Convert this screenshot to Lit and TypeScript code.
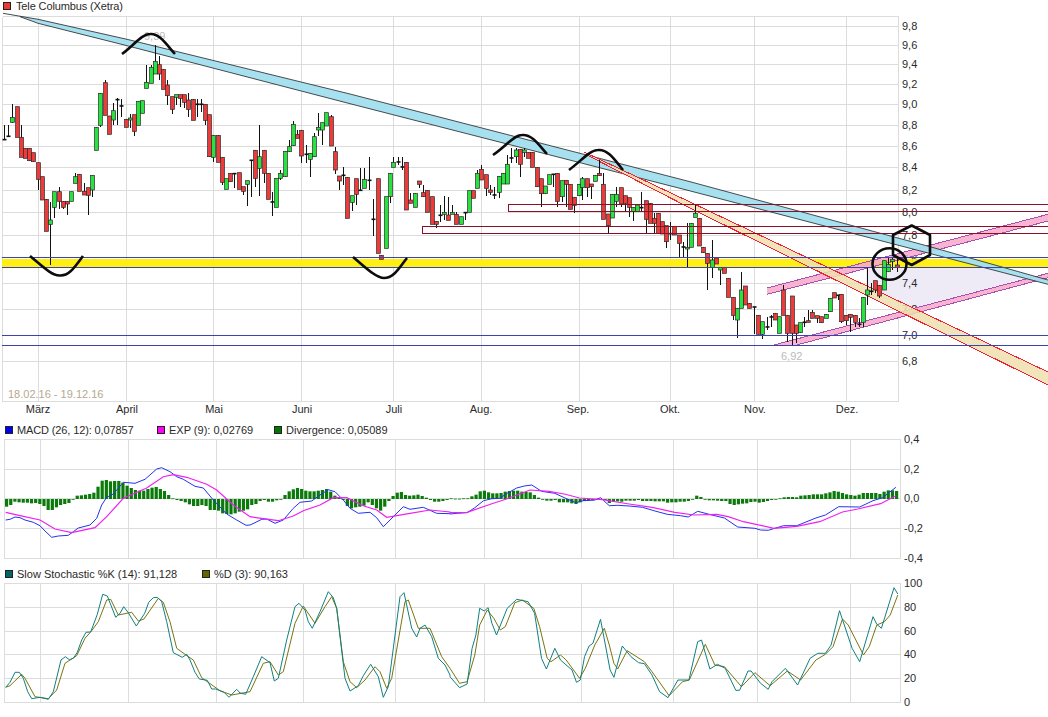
import { LitElement, html, svg, css } from "lit";
import { customElement } from "lit/decorators.js";

type C = [number, number, number, number, number, string];

// [zoomX, bodyTop, bodyBottom, wickTop, wickBottom, colour] in crop coordinates
const A: C[] = [
[12,418,418,375,418,"d"],[25,408,408,375,408,"d"],[37,352,367,312,370,"g"],[52,320,412,320,412,"r"],[64,412,472,375,472,"r"],
[76,445,475,445,475,"r"],[88,445,482,445,482,"r"],[100,458,485,458,485,"r"],[115,488,538,488,570,"r"],[127,530,600,530,600,"r"],
[139,598,694,598,694,"r"],[151,660,673,606,795,"g"],[163,575,622,575,655,"g"],[178,575,604,560,628,"r"],[190,604,622,604,628,"r"],
[202,604,612,604,645,"r"],[214,575,604,575,604,"g"],[226,530,550,520,550,"g"],[238,523,574,523,574,"r"],[253,574,585,550,585,"r"],
[265,563,586,563,645,"r"],[277,526,570,526,592,"g"],[289,382,451,382,451,"g"],[301,280,376,280,380,"g"],[316,248,346,240,346,"r"],
[328,348,403,348,403,"r"],[340,332,360,310,375,"g"],[352,298,298,293,375,"d"],[364,317,317,298,350,"d"],[379,358,382,358,382,"r"],
[391,354,360,342,385,"g"],[403,344,394,344,408,"r"],[415,304,376,304,376,"g"],[427,302,340,302,340,"g"],[439,247,265,195,265,"g"],
[454,202,250,195,250,"g"],[466,184,222,135,222,"g"],[478,194,222,168,240,"r"],[490,208,268,208,268,"r"],[502,255,287,240,315,"r"],
[517,290,328,290,342,"r"],[529,284,292,284,315,"g"],[541,284,295,284,322,"r"],[553,284,307,284,325,"r"],[565,300,328,278,350,"r"],
[580,298,361,298,361,"r"],[592,312,312,298,350,"d"],[604,312,312,298,335,"d"],[616,313,361,313,375,"r"],[628,344,470,344,470,"r"],
[640,406,472,406,485,"g"],[655,406,487,406,487,"r"],[667,472,547,472,555,"r"],[679,536,568,536,568,"g"],[691,520,545,520,545,"r"],
[703,520,520,520,565,"d"],[718,518,568,518,568,"r"],[730,560,574,560,586,"r"],[742,542,553,542,617,"g"],[754,480,480,480,590,"d"],
[766,451,535,451,560,"r"],[778,470,505,375,587,"g"],[793,451,520,451,550,"r"],[805,520,598,520,598,"r"],[817,605,605,575,648,"d"],
[829,535,622,535,622,"g"],[841,520,535,510,540,"g"],[856,454,530,454,530,"g"],[868,440,455,420,455,"g"],[880,373,437,362,437,"g"],
[892,403,415,390,415,"r"],[904,391,468,391,490,"r"],[919,462,462,435,490,"d"],[931,460,478,460,530,"g"],[943,410,470,400,470,"g"],
[955,382,390,340,408,"g"],[967,368,390,368,436,"g"],[979,338,378,338,378,"g"],[994,350,438,345,438,"r"],[1006,455,510,440,522,"r"],
[1018,528,543,528,570,"r"],[1030,525,525,500,556,"d"],[1042,532,655,532,655,"r"],
];
const B: C[] = [
[36,287,307,287,332,"g"],[49,236,283,236,315,"r"],[60,270,270,205,270,"d"],[73,238,265,205,265,"g"],[86,240,240,170,270,"d"],
[100,357,357,298,407,"d"],[113,236,460,236,460,"r"],[124,466,478,466,478,"r"],[137,290,445,290,445,"g"],[149,220,290,220,310,"g"],
[160,187,202,170,202,"g"],[175,185,185,170,195,"d"],[187,200,200,170,210,"d"],[199,187,330,187,330,"r"],[211,300,310,280,310,"r"],
[224,280,322,280,322,"g"],[238,243,253,243,265,"r"],[250,278,290,255,290,"r"],[262,271,337,271,337,"r"],[275,290,373,290,373,"r"],
[287,364,373,364,385,"r"],[300,345,345,315,365,"d"],[312,337,343,287,360,"g"],[325,345,361,290,361,"r"],[337,337,343,315,343,"g"],
[349,343,373,335,373,"r"],[362,350,373,350,373,"g"],[375,337,337,337,360,"d"],[388,272,337,272,337,"g"],[400,272,295,272,295,"r"],
[412,220,265,210,265,"g"],[424,208,240,195,240,"r"],[439,224,265,224,288,"r"],[451,270,277,255,285,"r"],[463,284,284,262,297,"d"],
[476,229,277,229,295,"g"],[488,220,252,220,252,"g"],[501,193,252,165,252,"g"],[514,173,173,143,190,"d"],[527,150,170,143,190,"g"],
[539,148,193,148,230,"r"],[551,150,158,143,170,"g"],[563,157,175,157,175,"r"],[577,157,202,157,202,"r"],[590,202,260,202,260,"r"],
[602,236,281,236,322,"r"],[614,258,281,258,281,"g"],[626,224,253,224,253,"g"],[640,222,222,222,260,"d"],[652,220,304,220,320,"r"],
[665,242,290,242,305,"g"],[677,241,253,241,320,"r"],[689,253,328,253,328,"r"],[703,292,316,292,340,"r"],[716,253,287,253,287,"g"],
[727,236,263,230,300,"g"],[740,236,263,236,290,"r"],[752,252,260,252,298,"r"],[765,226,244,226,244,"g"],[778,220,227,180,227,"r"],
[790,253,358,220,358,"r"],[803,342,377,342,400,"r"],[815,283,354,283,354,"g"],[828,283,304,262,320,"g"],[842,263,312,263,320,"r"],
[854,287,310,287,335,"r"],[866,293,322,293,350,"r"],[878,322,335,322,362,"g"],[890,315,335,315,335,"g"],[903,322,322,275,335,"d"],
[917,302,358,302,400,"r"],[929,310,370,310,370,"r"],[941,355,370,340,400,"r"],[953,340,400,340,400,"r"],[965,365,402,365,402,"r"],
[978,377,425,377,445,"r"],[990,400,400,365,420,"d"],[1003,380,405,380,405,"r"],[1016,405,430,405,470,"r"],[1029,440,440,425,475,"d"],
[1042,442,447,370,500,"g"],
];
const D: C[] = [
[34,100,172,100,172,"g"],[46,70,82,45,82,"g"],[58,85,168,85,168,"r"],[70,172,188,172,188,"r"],[82,190,220,190,300,"r"],
[95,210,232,150,265,"g"],[108,204,222,204,222,"r"],[121,232,240,232,285,"g"],[133,232,250,232,250,"r"],[145,265,322,265,322,"r"],
[160,322,376,322,390,"r"],[172,355,390,355,443,"g"],[184,300,355,245,355,"g"],[196,288,345,288,345,"r"],[208,340,355,340,355,"r"],
[222,350,350,350,432,"d"],[235,376,433,376,433,"r"],[247,395,433,395,448,"g"],[260,410,410,380,420,"d"],[272,380,380,375,410,"d"],
[284,370,390,370,390,"r"],[298,380,430,380,430,"g"],[310,300,376,285,376,"r"],[322,376,430,376,455,"r"],[335,318,430,318,465,"r"],
[347,405,430,405,460,"r"],[360,398,428,398,428,"g"],[372,396,396,380,410,"d"],[385,392,397,360,397,"r"],[397,367,385,360,385,"r"],
[410,377,385,377,400,"r"],[424,380,398,380,398,"r"],[437,373,385,373,385,"g"],[449,325,365,325,365,"g"],[461,308,324,308,324,"r"],
[473,315,315,315,330,"d"],[484,313,395,313,400,"r"],[498,376,392,376,405,"r"],[511,373,382,373,425,"r"],[524,376,397,376,410,"r"],
[536,402,402,385,410,"d"],[548,322,397,322,412,"g"],[562,300,315,235,345,"g"],[574,303,303,280,315,"d"],[586,272,300,272,310,"r"],
[598,286,318,286,325,"r"],[611,212,300,212,300,"g"],[624,223,245,205,245,"g"],[637,208,215,200,240,"g"],[650,225,232,205,245,"r"],
];

const candle = (rows: C[], ox: number, oy: number) =>
  rows.map(([zx, t, b, wt, wb, c]) => {
    const x = Math.round(ox + zx / 3) + 0.5;
    const y = (v: number) => oy + v / 3;
    const wick = svg`<line class="wick" x1=${x} x2=${x} y1=${y(wt)} y2=${y(wb)}></line>`;
    if (c === "d") {
      return svg`${wick}<rect class="doji" x=${x - 2} y=${y(t) - 0.5} width="4" height="1.6"></rect>`;
    }
    return svg`${wick}<rect class=${c === "r" ? "red" : "green"} x=${x - 1.9} y=${y(t)} width="3.8" height=${Math.max(y(b) - y(t), 1.5)}></rect>`;
  });

const pts = (p: number[][], sx: number, ox: number, oy: number) =>
  p.map(([x, y]) => `${(ox + x / sx).toFixed(1)},${(oy + y / 3).toFixed(1)}`).join(" ");

const S2 = 2.624;
const macdA = [[17,300],[30,298],[45,291],[60,293],[75,300],[100,307],[120,317],[135,333],[155,352],[175,348],[205,346],[220,335],[235,324],[270,315],[290,295],[305,255],[320,232],[340,222],[370,187],[405,190],[435,178],[470,147],[485,143],[510,155],[530,170],[550,178],[585,199],[610,204],[640,240],[680,282],[710,300],[738,316],[750,315],[765,308],[785,298],[800,297],[825,310],[850,300],[880,265],[900,247],[935,243],[960,225],[985,209],[1005,215],[1030,240],[1050,265],[1075,280],[1110,277],[1130,293],[1150,320],[1170,300],[1210,260],[1230,268],[1270,262],[1310,280],[1350,281]];
const macdB = [[0,252],[20,250],[45,248],[65,233],[88,212],[110,206],[130,205],[150,190],[175,174],[195,168],[215,165],[240,184],[275,190],[300,203],[330,218],[350,212],[380,210],[395,203],[418,227],[440,226],[470,228],[505,232],[535,242],[570,253],[605,257],[625,261],[650,244],[680,253],[720,264],[755,291],[800,295],[815,300],[835,301],[875,287],[910,287],[960,264],[985,255],[1020,230],[1075,231],[1110,212],[1135,203],[1170,172]];
const expA = [[17,277],[60,287],[120,300],[165,327],[215,338],[285,323],[320,290],[370,235],[440,204],[490,170],[520,164],[560,172],[620,193],[650,210],[700,255],[750,290],[790,296],[835,302],[880,288],[910,272],[960,255],[1000,233],[1040,233],[1090,257],[1130,270],[1160,292],[1230,280],[1290,270],[1350,276]];
const expB = [[0,248],[45,247],[110,221],[150,206],[210,180],[260,184],[300,192],[340,204],[400,209],[470,222],[530,232],[590,247],[640,255],[700,253],[730,260],[770,275],[850,295],[910,289],[970,275],[1030,246],[1070,237],[1130,221],[1170,197]];
const kA = [[17,367],[30,352],[45,322],[58,322],[70,340],[83,380],[95,401],[120,397],[145,403],[160,380],[183,285],[196,275],[208,284],[220,280],[232,262],[245,225],[258,202],[272,201],[292,148],[308,88],[322,93],[347,157],[360,145],[371,125],[385,143],[409,183],[434,145],[446,112],[460,98],[472,97],[485,110],[500,170],[520,263],[547,277],[560,268],[570,285],[585,322],[598,342],[622,346],[635,372],[647,372],[672,382],[687,397],[710,373],[720,384],[737,388],[760,335],[785,275],[810,293],[823,348],[835,340],[860,225],[885,125],[897,115],[915,135],[925,170],[937,190],[960,140],[985,80],[1000,98],[1010,130],[1035,340],[1050,378],[1075,362],[1090,332],[1112,298],[1135,335],[1150,397],[1165,365],[1200,95],[1212,83],[1235,190],[1250,216],[1260,190],[1275,180],[1295,215],[1315,280],[1335,300],[1350,330]];
const kB = [[0,335],[25,368],[45,357],[58,250],[68,210],[78,130],[90,138],[100,128],[110,175],[122,210],[150,130],[175,103],[205,110],[222,145],[240,280],[253,312],[275,250],[290,285],[320,315],[332,352],[342,345],[353,275],[365,243],[375,235],[395,163],[420,315],[430,337],[452,243],[475,275],[495,293],[510,296],[530,330],[550,380],[572,398],[598,345],[627,345],[650,230],[660,225],[682,312],[702,298],[722,310],[750,376],[760,376],[782,318],[790,318],[815,355],[835,373],[845,350],[880,310],[912,360],[945,280],[965,265],[985,265],[1000,240],[1022,137],[1055,250],[1075,290],[1110,155],[1120,178],[1132,190],[1165,68],[1175,87]];
const dA = [[17,367],[30,362],[65,328],[75,340],[105,395],[145,401],[170,375],[195,295],[230,272],[255,220],[275,197],[295,170],[320,105],[332,103],[355,150],[395,142],[415,168],[432,162],[475,100],[490,112],[510,170],[530,250],[555,268],[580,285],[605,338],[660,377],[695,390],[750,380],[790,295],[810,290],[835,330],[850,320],[885,175],[910,123],[945,175],[975,125],[995,95],[1010,130],[1030,290],[1050,350],[1070,368],[1095,345],[1125,305],[1140,320],[1160,370],[1175,340],[1215,110],[1225,105],[1255,190],[1290,190],[1325,275],[1350,310]];
const dB = [[0,310],[25,355],[45,350],[65,270],[78,180],[98,135],[115,160],[132,195],[145,185],[170,113],[190,105],[220,130],[235,185],[255,280],[265,290],[290,270],[305,285],[340,340],[355,310],[380,240],[405,190],[418,240],[430,295],[440,312],[465,257],[510,290],[530,320],[575,392],[610,350],[628,345],[670,238],[695,300],[720,305],[765,365],[800,323],[840,362],[885,318],[920,345],[960,285],[985,268],[1005,245],[1030,162],[1045,180],[1085,270],[1100,245],[1120,180],[1140,170],[1155,150],[1175,90]];

// histogram: height in 3x crop units, positive up, one bar per trading day
const hist1 = [-23,-18,-8,-10,-11,-11,-13,-12,-15,-21,-33,-33,-25,-18,-15,-12,0,10,11,13,15,19,37,55,57,53,54,54,49,40,33,27,25,25,30,34,36,30,24,12,2,-3,-6,-10,-16,-21,-21,-18,-21,-33,-33,-35,-43,-45,-46,-43,-38,-35,-31,-18,-15,-6,-3,-8,-8,-4,0,12,23,29,33,30,25,23,23,25,27,30,22,10,4,-3,-21,-28,-25,-23,-20,-10,-18,-28,-35,-23,-6,9,19,21,12,10,11,13,9,4,-3,-8,-8,-6,-3];
const hist2 = [2,1,1,2,2,8,13,23,25,20,17,17,18,22,24,25,25,22,21,20,12,4,-2,-5,-5,-3,-10,-10,-10,-13,-15,-10,-6,-5,-4,-2,0,-3,-12,-9,-7,-8,-5,-5,-5,-3,-6,-6,-6,-7,-7,-7,-11,-10,-10,-8,-8,-6,-2,10,6,-2,-4,-4,-5,-6,-6,-15,-18,-16,-14,-13,-9,-8,-11,-9,-6,-3,-1,2,5,6,6,5,10,11,12,14,14,14,17,20,24,22,18,14,12,10,13,18,18,18,18,15,22,26,26,24];

const mainY: [string, number][] = [["9,8",26],["9,6",45],["9,4",64],["9,2",84],["9,0",104],["8,8",125],["8,6",146],["8,4",167],["8,2",190],["8,0",212],["7,8",235],["7,6",259],["7,4",283],["7,2",309],["7,0",335],["6,8",361]];
const mainX = [38,126,213,301,393,481,579,670,754,846];
const months: [string, number][] = [["März",38],["April",127],["Mai",214],["Juni",302],["Juli",394],["Aug.",481],["Sep.",578],["Okt.",670],["Nov.",755],["Dez.",847]];
const lowerX = [40,128,216,303,395,484,581,673,757,850];

const arc = (d: string) => svg`<path class="ink" d=${d}></path>`;

const bars = (list: number[], from: number, to: number) => {
  const step = (to - from) / (list.length - 1);
  return list.map((v, i) => {
    const h = Math.abs(v) / 3;
    return svg`<rect class="bar" x=${from + i * step} y=${v > 0 ? 499 - h : 499} width="3.2" height=${Math.max(h, 0.8)}></rect>`;
  });
};

@customElement("app-root")
export class AppRoot extends LitElement {
  static styles = css`
    :host { display: block; width: 1048px; height: 717px; background: #fff; overflow: hidden; font-family: "Liberation Sans", Arial, sans-serif; font-size: 11px; color: #2a2a2a; }
    .legend { display: flex; align-items: center; }
    .l1 { height: 12px; padding-left: 3px; letter-spacing: -0.13px; }
    .l2 { height: 20px; padding-top: 4px; box-sizing: border-box; padding-left: 5px; }
    .l3 { height: 16px; padding-left: 5px; }
    .item { display: flex; align-items: center; gap: 4px; white-space: nowrap; }
    .l1 .item { gap: 5px; }
    .m1 { width: 152px; letter-spacing: -0.13px; }
    .m2 { width: 117px; }
    .s1 { width: 197px; }
    .sq { width: 6px; height: 6px; border: 1px solid #222; flex: none; }
    svg { display: block; overflow: visible; }
    text { font-family: "Liberation Sans", Arial, sans-serif; font-size: 11px; fill: #2a2a2a; }
    .grid { stroke: #dcdcdc; stroke-width: 1; shape-rendering: crispEdges; }
    .wick { stroke: #111; stroke-width: 1; shape-rendering: crispEdges; }
    .doji { fill: #111; }
    .red { fill: #f03a3a; stroke: #2a2a2a; stroke-width: 0.7; }
    .green { fill: #26e33e; stroke: #2a2a2a; stroke-width: 0.7; }
    .faint { fill: #bbb; }
    .range { fill: #b5a98e; }
    .ink { fill: none; stroke: #0c0c0c; stroke-width: 2.6; stroke-linejoin: round; }
    .yellow { fill: #ffee00; opacity: 0.92; }
    .hline { stroke: #3a44b0; stroke-width: 1; shape-rendering: crispEdges; }
    .box { stroke: #8a1028; stroke-width: 1; shape-rendering: crispEdges; fill: none; }
    .lav { fill: #eeebf7; }
    .bluefill { fill: #a2deee; opacity: 0.95; }
    .blueline { stroke: #222; stroke-width: 0.8; fill: none; }
    .orfill { fill: #eedfae; opacity: 0.85; }
    .orline { stroke: #f02030; stroke-width: 1; fill: none; shape-rendering: crispEdges; }
    .pkfill { fill: #f8aacb; opacity: 0.88; }
    .pkline { stroke: #a850b0; stroke-width: 1; fill: none; shape-rendering: crispEdges; }
    .macd { stroke: #2233ee; stroke-width: 1; fill: none; }
    .exp { stroke: #f020f0; stroke-width: 1.2; fill: none; }
    .bar { fill: #0a7a0a; }
    .k { stroke: #117f80; stroke-width: 1; fill: none; }
    .d { stroke: #7a7410; stroke-width: 1; fill: none; }
  `;

  private mainChart() {
    const hs = mainY.map(([, y]) => svg`<line class="grid" x1="2.5" x2="898.5" y1=${y + 0.5} y2=${y + 0.5}></line>`);
    const vs = mainX.map((x) => svg`<line class="grid" x1=${x + 0.5} x2=${x + 0.5} y1="16.5" y2="401.5"></line>`);
    return svg`
      <svg width="1048" height="406" viewBox="0 12 1048 406">
        <line class="grid" x1="2.5" x2="898.5" y1="16.5" y2="16.5"></line>
        <line class="grid" x1="2.5" x2="898.5" y1="401.5" y2="401.5"></line>
        <line class="grid" x1="2.5" x2="2.5" y1="16.5" y2="401.5"></line>
        <line class="grid" x1="898.5" x2="898.5" y1="16.5" y2="401.5"></line>
        ${hs}${vs}
        <polygon class="lav" points="866,268 1000,267 1027,281 915,309 866,286"></polygon>
        ${mainY.map(([t, y]) => svg`<text x="902" y=${y + 4}>${t}</text>`)}
        ${months.map(([t, x]) => svg`<text x=${x} y="413" text-anchor="middle">${t}</text>`)}
        <text class="range" x="8" y="398">18.02.16 - 19.12.16</text>
        <text class="faint" x="144" y="40">9,39</text>
        <text class="faint" x="781" y="360">6,92</text>

        <rect class="yellow" x="2" y="259" width="1046" height="8"></rect>

        <polygon class="pkfill" points="767,288 1048,214.3 1048,221 767,294.3"></polygon>
        <polyline class="pkline" points="767,288 1048,214.3"></polyline>
        <polyline class="pkline" points="767,294.3 1048,221"></polyline>
        <polygon class="pkfill" points="770,346 1048,273.3 1048,277.7 793,346"></polygon>
        <polyline class="pkline" points="770,346 1048,273.3"></polyline>
        <polyline class="pkline" points="793,346 1048,277.7"></polyline>

        <polygon class="bluefill" points="3,13.3 38,19.3 127,39.3 350,94 690,181.7 930,246.7 1048,280 1048,284.3 930,253.5 690,190.9 350,103.7 127,45.7 38,23.3 20,16.7"></polygon>
        <polyline class="blueline" points="3,13.3 38,19.3 127,39.3 350,94 690,181.7 930,246.7 1048,280"></polyline>
        <polyline class="blueline" points="20,16.7 38,23.3 127,45.7 350,103.7 690,190.9 930,253.5 1048,284.3"></polyline>

        <polygon class="orfill" points="584,152 690,202 1048,372 1048,385 690,208 587,155"></polygon>
        <polyline class="orline" points="584,152 690,202 1048,372"></polyline>
        <polyline class="orline" points="587,155 690,208 1048,385"></polyline>

        ${candle(A, 0, 0)}
        ${candle(B, 340, 100)}
        ${candle(D, 680, 190)}

        <line class="hline" x1="2" x2="1048" y1="257.5" y2="257.5"></line>
        <line class="hline" x1="2" x2="1048" y1="267.5" y2="267.5"></line>
        <line class="hline" x1="2" x2="1048" y1="335.5" y2="335.5"></line>
        <line class="hline" x1="2" x2="1048" y1="345.5" y2="345.5"></line>
        <path class="box" d="M1048 226.5H422.5V233.5H1048"></path>
        <path class="box" d="M1048 204.5H508.5V211.5H1048"></path>

        ${arc("M122 54C134 45 142 34 150 34 159 33 166 44 175 54")}
        ${arc("M30 256C42 266 52 276 60 275.5 69 276 74 268 83 256")}
        ${arc("M353 257C365 267 376 278 384 278 394 278 399 268 407 258")}
        ${arc("M493 155C505 147 514 135 522 135 532 134 539 145 547 154")}
        ${arc("M569 170C581 161 590 150 598 150 608 149 615 160 623 170")}
        <ellipse class="ink" cx="889.5" cy="264" rx="17" ry="15.7"></ellipse>
        <polygon class="ink" points="911.7,225.5 930,235 930,255 911.7,265 893,255 893,235"></polygon>
      </svg>`;
  }

  private frame(left: number, right: number, top: number, bottom: number, ys: number[]) {
    const lines = [top, ...ys, bottom].map((y) => svg`<line class="grid" x1=${left} x2=${right} y1=${y + 0.5} y2=${y + 0.5}></line>`);
    const vs = [left, ...lowerX, right - 0.5].map((x) => svg`<line class="grid" x1=${Math.floor(x) + 0.5} x2=${Math.floor(x) + 0.5} y1=${top + 0.5} y2=${bottom + 0.5}></line>`);
    return svg`${lines}${vs}`;
  }

  private macdChart() {
    const labels: [string, number][] = [["0,4", 439], ["0,2", 469], ["0,0", 498], ["-0,2", 528], ["-0,4", 558]];
    return svg`
      <svg width="1048" height="128" viewBox="0 438 1048 128">
        ${this.frame(4, 901, 439, 558, [469, 498, 528])}
        ${labels.map(([t, y]) => svg`<text x="904" y=${y + 4}>${t}</text>`)}
        ${bars(hist1, 5, 445.5)}
        ${bars(hist2, 449.5, 895)}
        <polyline class="macd" points=${pts(macdA, 3, 0, 420) + " " + pts(macdB, S2, 450, 430)}></polyline>
        <polyline class="exp" points=${pts(expA, 3, 0, 420) + " " + pts(expB, S2, 450, 430)}></polyline>
      </svg>`;
  }

  private stochChart() {
    const labels: [string, number][] = [["100", 583], ["80", 607], ["60", 631], ["40", 654], ["20", 678], ["0", 702]];
    return svg`
      <svg width="1048" height="135" viewBox="0 582 1048 135">
        ${this.frame(4, 901, 583, 702, [607, 631, 654, 678])}
        ${labels.map(([t, y]) => svg`<text x="904" y=${y + 4}>${t}</text>`)}
        <polyline class="d" points=${pts(dA, 3, 0, 565) + " " + pts(dB, S2, 450, 565)}></polyline>
        <polyline class="k" points=${pts(kA, 3, 0, 565) + " " + pts(kB, S2, 450, 565)}></polyline>
      </svg>`;
  }

  render() {
    const item = (c: string, t: string, cls = "") =>
      html`<span class="item ${cls}"><span class="sq" style="background:${c}"></span>${t}</span>`;
    return html`
      <div class="legend l1">${item("#ee3838", "Tele Columbus (Xetra)")}</div>
      ${this.mainChart()}
      <div class="legend l2">
        ${item("#0000ee", "MACD (26, 12): 0,07857", "m1")}
        ${item("#ff00ff", "EXP (9): 0,02769", "m2")}
        ${item("#007700", "Divergence: 0,05089")}
      </div>
      ${this.macdChart()}
      <div class="legend l3">
        ${item("#006666", "Slow Stochastic %K (14): 91,128", "s1")}
        ${item("#666600", "%D (3): 90,163")}
      </div>
      ${this.stochChart()}
    `;
  }
}
